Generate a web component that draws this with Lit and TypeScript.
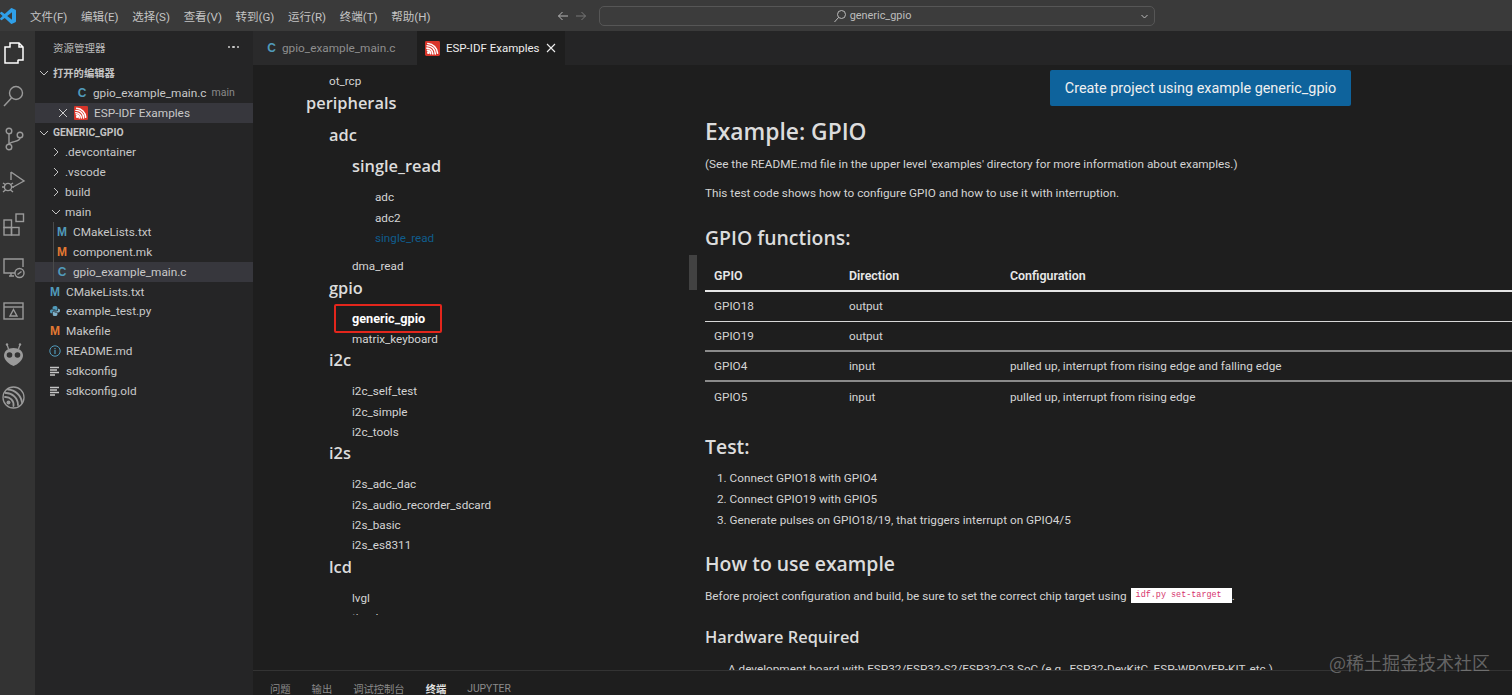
import { LitElement, html, css, svg } from "lit";
import { customElement } from "lit/decorators.js";

const esp = (s: number) => html`<svg class="esp" width=${s} height=${s} viewBox="0 0 16 16"><rect width="16" height="16" rx="1.5" fill="#d8352a"/><g fill="none" stroke="#fff" stroke-width="1.7" stroke-linecap="round"><path d="M3 2.6a11 11 0 0 1 10.4 10.4"/><path d="M2.2 5a8.6 8.6 0 0 1 8.8 8.8"/><path d="M2 7.6a6.2 6.2 0 0 1 6.4 6.2"/><path d="M2.6 10a3.6 3.6 0 0 1 3.4 3.6"/></g><circle cx="3.600" cy="12.400" r="1.400" fill="#fff"/></svg>`;
const chevD = html`<svg class="chev" width="12" height="12" viewBox="0 0 12 12"><path d="M2 4l4 4 4-4" fill="none" stroke="#c5c5c5" stroke-width="1"/></svg>`;
const chevR = html`<svg class="chev" width="12" height="12" viewBox="0 0 12 12"><path d="M4 2l4 4-4 4" fill="none" stroke="#c5c5c5" stroke-width="1"/></svg>`;
const info = html`<svg width="12" height="12" viewBox="0 0 12 12"><circle cx="6" cy="6" r="5.2" fill="none" stroke="#519aba" stroke-width="1"/><path d="M6 5v4M6 3v1.2" stroke="#519aba" stroke-width="1.2"/></svg>`;
const py = html`<svg width="12" height="12" viewBox="0 0 12 12"><path d="M6 1C4 1 3.600 1.800 3.600 2.600V4H6.400V4.600H2.400C1.400 4.600 1 5.400 1 6.400S1.500 8.200 2.400 8.200H3.400V7C3.400 6 4.200 5.400 5 5.400H7.400C8 5.400 8.400 5 8.400 4.400V2.600C8.400 1.600 7.600 1 6 1Z" fill="#519aba"/><path d="M6 11C8 11 8.400 10.200 8.400 9.400V8H5.600V7.400H9.600C10.600 7.400 11 6.600 11 5.600S10.500 3.800 9.600 3.800H9V5C9 6 8 6.400 7.200 6.400H4.800C4.200 6.400 3.800 7 3.800 7.600V9.400C3.800 10.400 4.400 11 6 11Z" fill="#7fb0c8"/></svg>`;
const lines = html`<svg width="12" height="12" viewBox="0 0 12 12"><path d="M1 2.500h9M1 5h7M1 7.500h9M1 10h5" stroke="#c5c5c5" stroke-width="1.300"/></svg>`;

type Ic = "c" | "m" | "mo" | "info" | "py" | "lines" | "";
const icon = (k: Ic) => {
  switch (k) {
    case "c": return html`<span class="fi c">C</span>`;
    case "m": return html`<span class="fi m">M</span>`;
    case "mo": return html`<span class="fi mo">M</span>`;
    case "info": return html`<span class="fi">${info}</span>`;
    case "py": return html`<span class="fi">${py}</span>`;
    case "lines": return html`<span class="fi">${lines}</span>`;
    default: return "";
  }
};

const ACT = [
  svg`<path d="M9 3h9l4 4v13H9zM18 3v4h4" fill="none" stroke="#fff" stroke-width="1.500"/><path d="M9 7H4v16h13v-3" fill="#333" stroke="#fff" stroke-width="1.500"/>`,
  svg`<circle cx="15" cy="10" r="6.500" fill="none" stroke="#9a9a9a" stroke-width="1.400"/><path d="M10.500 15L3 23" stroke="#9a9a9a" stroke-width="1.500"/>`,
  svg`<g fill="none" stroke="#9a9a9a" stroke-width="1.400"><circle cx="8" cy="5" r="2.800"/><circle cx="8" cy="21" r="2.800"/><circle cx="19" cy="9" r="2.800"/><path d="M8 8v10M19 12c0 4-9 3-11 6"/></g>`,
  svg`<g fill="none" stroke="#9a9a9a" stroke-width="1.400"><path d="M10 3l13 9-11 6M10 3v8"/><circle cx="7" cy="18" r="3.600"/><path d="M2 14l3 2M12 14l-3 2M1 18h2.500M13 18h-2.500M2 23l3-2.500M12 23l-3-2.500"/></g>`,
  svg`<g fill="none" stroke="#9a9a9a" stroke-width="1.400"><rect x="3" y="8" width="7.500" height="7.500"/><rect x="3" y="15.500" width="7.500" height="7.500"/><rect x="10.500" y="15.500" width="7.500" height="7.500"/><rect x="15" y="2" width="7.500" height="7.500"/></g>`,
  svg`<g fill="none" stroke="#9a9a9a" stroke-width="1.400"><path d="M14 18H3V4h19v8M8 21h5M10 18v3"/><circle cx="18.500" cy="18" r="4.500"/><path d="M16.500 19.500l4-3"/></g>`,
  svg`<g fill="none" stroke="#9a9a9a" stroke-width="1.400"><rect x="3" y="4" width="19" height="16"/><path d="M3 8h19"/></g><path d="M12.500 10.500l3.500 6.500h-7z" fill="none" stroke="#9a9a9a" stroke-width="1.400"/>`,
  svg`<path d="M12.500 6c5.500 0 9.500 3 9.500 7.500 0 5-5.500 9-9.500 10.500C8.500 22.500 3 18.500 3 13.500 3 9 7 6 12.500 6z" fill="#9a9a9a"/><path d="M7.500 7L6 2.500M17.500 7L19 2.500" stroke="#9a9a9a" stroke-width="1.300"/><circle cx="6" cy="2.500" r="1.200" fill="#9a9a9a"/><circle cx="19" cy="2.500" r="1.200" fill="#9a9a9a"/><circle cx="8.500" cy="13" r="2.800" fill="#333"/><circle cx="16.500" cy="13" r="2.800" fill="#333"/>`,
  svg`<circle cx="12.500" cy="12.500" r="10.500" fill="none" stroke="#9a9a9a" stroke-width="1.300"/><g fill="none" stroke="#9a9a9a" stroke-width="1.800" stroke-linecap="round"><path d="M7 4.500a15 15 0 0 1 14 13"/><path d="M4.500 8a12 12 0 0 1 12.500 12"/><path d="M4 12a8 8 0 0 1 8.500 9"/></g><circle cx="7.500" cy="17.500" r="2" fill="#9a9a9a"/>`,
];

const FILES: { t: string; pad: number; ic: Ic; chev?: any; sel?: boolean; head?: boolean; desc?: string; x?: boolean; esp?: boolean; guide?: boolean }[] = [
  { t: "打开的编辑器", pad: 3, ic: "", chev: chevD, head: true },
  { t: "gpio_example_main.c", pad: 41, ic: "c", desc: "main" },
  { t: "ESP-IDF Examples", pad: 23, ic: "", x: true, esp: true, sel: true },
  { t: "GENERIC_GPIO", pad: 3, ic: "", chev: chevD, head: true },
  { t: ".devcontainer", pad: 15, ic: "", chev: chevR },
  { t: ".vscode", pad: 15, ic: "", chev: chevR },
  { t: "build", pad: 15, ic: "", chev: chevR },
  { t: "main", pad: 15, ic: "", chev: chevD },
  { t: "CMakeLists.txt", pad: 21, ic: "m", guide: true },
  { t: "component.mk", pad: 21, ic: "mo", guide: true },
  { t: "gpio_example_main.c", pad: 21, ic: "c", guide: true, sel: true },
  { t: "CMakeLists.txt", pad: 14, ic: "m" },
  { t: "example_test.py", pad: 14, ic: "py" },
  { t: "Makefile", pad: 14, ic: "mo" },
  { t: "README.md", pad: 14, ic: "info" },
  { t: "sdkconfig", pad: 14, ic: "lines" },
  { t: "sdkconfig.old", pad: 14, ic: "lines" },
];

const TREE: [string, string][] = [
  ["l1", "ot_rcp"],
  ["h0", "peripherals"],
  ["h1", "adc"],
  ["h2", "single_read"],
  ["l2", "adc"],
  ["l2", "adc2"],
  ["l2 link", "single_read"],
  ["l1x", "dma_read"],
  ["h1", "gpio"],
  ["l1x cur", "generic_gpio"],
  ["l1x", "matrix_keyboard"],
  ["h1", "i2c"],
  ["l1x", "i2c_self_test"],
  ["l1x", "i2c_simple"],
  ["l1x", "i2c_tools"],
  ["h1", "i2s"],
  ["l1x", "i2s_adc_dac"],
  ["l1x", "i2s_audio_recorder_sdcard"],
  ["l1x", "i2s_basic"],
  ["l1x", "i2s_es8311"],
  ["h1", "lcd"],
  ["l1x", "lvgl"],
  ["l1x", "tjpgd"],
];

const ROWS = [
  ["GPIO18", "output", "", "w"],
  ["GPIO19", "output", "", "g"],
  ["GPIO4", "input", "pulled up, interrupt from rising edge and falling edge", "g"],
  ["GPIO5", "input", "pulled up, interrupt from rising edge", ""],
];

@customElement("app-root")
export class AppRoot extends LitElement {
  static styles = css`
    :host { display: block; width: 1512px; height: 695px; overflow: hidden; position: relative; background: #1e1e1e; color: #ccc; font-family: Roboto, "Noto Sans CJK SC", sans-serif; font-size: 12px; }
    .titlebar { height: 31px; background: #3a3a3a; display: flex; align-items: center; position: relative; }
    .logo { margin: 0 8px 0 0; width: 16px; height: 16px; flex: none; }
    .menu { display: flex; gap: 13.700px; margin-left: 6px; color: #c4c4c4; font-size: 11.500px; width: 527px; flex: none; white-space: nowrap; }
    .nav { display: flex; gap: 6px; width: 42px; align-items: center; flex: none; }
    .cmd { width: 556px; height: 20px; box-sizing: border-box; border: 1px solid #565656; border-radius: 5px; background: #3c3c3c; display: flex; align-items: center; justify-content: center; gap: 3px; color: #bdbdbd; font-size: 10.900px; position: relative; flex: none; padding-right: 10px; }
    .cmd .dd { position: absolute; right: 5px; top: 5px; }
    .body { display: flex; height: 664px; }
    .activity { width: 35px; background: #333; flex: none; display: flex; flex-direction: column; align-items: flex-start; padding: 9px 0 0 1px; gap: 18.100px; box-sizing: border-box; }
    .activity svg { display: block; flex: none; }
    .side { width: 218px; background: #252526; flex: none; display: flex; flex-direction: column; }
    .side-head { height: 32px; display: flex; align-items: center; justify-content: space-between; padding: 0 14px 0 18px; font-size: 10.500px; color: #bbb; }
    .dots { display: flex; gap: 2px; }
    .dots i { width: 2.500px; height: 2.500px; background: #ccc; border-radius: 50%; display: block; }
    .row { height: 19.880px; display: flex; align-items: center; white-space: nowrap; color: #c8c8c8; font-size: 11.800px; position: relative; box-sizing: border-box; }
    .row.sel { background: #37373d; }
    .row.head { font-weight: 700; font-size: 10.300px; color: #c4c4c4; }
    .row .chev { margin-right: 3px; flex: none; }
    .row .desc { color: #8a8a8a; font-size: 10.500px; margin-left: 5px; }
    .guide { position: absolute; left: 18px; top: 0; bottom: 0; width: 1px; background: #4a4a4a; }
    .fi { width: 12px; height: 16px; margin-right: 5px; display: inline-flex; align-items: center; justify-content: center; font-weight: 700; font-size: 12px; flex: none; color: #519aba; font-family: "Liberation Sans", sans-serif; }
    .fi.mo { color: #e37933; }
    .xbtn { width: 14px; margin-right: 2px; display: inline-flex; color: #ccc; }
    .esp { flex: none; margin-right: 6px; display: block; }
    .main { flex: 1; min-width: 0; display: flex; flex-direction: column; }
    .tabs { height: 34px; background: #252526; display: flex; flex: none; }
    .tab { display: flex; align-items: center; height: 34px; box-sizing: border-box; padding-left: 13px; font-size: 11.800px; color: #8e8e8e; white-space: nowrap; }
    .tab.one { width: 164px; background: #2a2a2b; }
    .tab.one .fi { margin-right: 5px; width: 11px; }
    .tab.two { width: 148px; background: #1e1e1e; color: #ededed; padding-left: 8px; font-size: 11.500px; }
    .tab.two .close { margin-left: auto; margin-right: 9px; display: flex; }
    .editor { flex: 1; min-height: 0; display: flex; position: relative; overflow: hidden; }
    .tree { width: 435px; flex: none; height: 550px; overflow: hidden; padding: 6.300px 0 0 53px; box-sizing: border-box; }
    .tree div { white-space: nowrap; color: #d4d4d4; }
    .h0, .h1, .h2 { font-family: "Open Sans", sans-serif; font-size: 16.400px; font-weight: 600; line-height: 21.800px; margin-bottom: 10px; }
    .tree .h0, .tree .h1, .tree .h2 { color: #dcdcdc; }
    .h1 { margin-left: 23px; }
    .h2 { margin-left: 46px; }
    .l1, .l1x, .l2 { font-size: 11.700px; line-height: 20.400px; }
    .l1 { margin-left: 23px; }
    .l1x { margin-left: 46px; }
    .l2 { margin-left: 69px; }
    .tree .link { color: #0f5c8c; margin-bottom: 8px; }
    .tree .cur { font-weight: 700; font-size: 12.700px; color: #fff; position: relative; }
    .redbox { position: absolute; left: -18px; top: -4.500px; width: 108px; height: 29px; box-sizing: border-box; border: 2px solid #e3261c; border-radius: 2px; }
    .doc { flex: 1; min-width: 0; padding: 5px 0 0 17px; color: #d4d4d4; font-size: 11.750px; overflow: hidden; }
    .doc-btn { display: flex; justify-content: flex-start; margin-left: 345px; }
    .btn { width: 301px; height: 36px; background: #0e639c; border-radius: 2px; color: #f0f0f0; display: flex; align-items: center; justify-content: center; font-size: 14.400px; }
    h1, h2, h3 { margin: 0; font-family: "Open Sans", sans-serif; font-weight: 600; color: #dcdcdc; white-space: nowrap; }
    h1 { font-size: 22.800px; line-height: 30px; margin-top: 11px; }
    h2 { font-size: 19.400px; line-height: 26px; }
    h3 { font-size: 16.400px; line-height: 22px; margin-top: 21px; }
    p { margin: 0; line-height: 18px; white-space: nowrap; }
    .p1 { margin-top: 8px; }
    .p2 { margin-top: 11px; }
    .h-fn { margin-top: 23px; }
    .table { margin-top: 10px; width: 807px; }
    .tr { display: grid; grid-template-columns: 135px 161px 1fr; padding-left: 9px; align-items: center; height: 30.200px; box-sizing: border-box; }
    .tr.th { height: 30.500px; font-weight: 600; font-size: 12.400px; color: #e8e8e8; border-bottom: 2px solid #e6e6e6; }
    .tr.w { border-bottom: 1px solid #d8d8d8; }
    .tr.g { border-bottom: 2px solid #8a8a8a; }
    .h-test { margin-top: 21.900px; }
    ol { margin: 8px 0 0; padding: 0 0 0 12px; list-style: none; }
    ol li { line-height: 20.800px; white-space: nowrap; }
    .h-how { margin-top: 20px; }
    .p3 { margin-top: 10px; display: flex; align-items: center; }
    code { background: #fff; color: #d6336c; font-family: "Liberation Mono", monospace; font-size: 8.450px; padding: 0 10px 0 5px; margin-left: 4px; line-height: 15px; height: 15px; display: inline-block; }
    .hw { margin-top: 12px; padding-left: 23px; line-height: 18px; white-space: nowrap; }
    .thumb { position: absolute; left: 436px; top: 190px; width: 8px; height: 35px; background: #424242; }
    .panel { height: 25px; flex: none; box-sizing: border-box; background: #1e1e1e; border-top: 1px solid #333; position: relative; z-index: 1; display: flex; align-items: center; padding: 10px 0 0 17px; gap: 21px; font-size: 10.300px; color: #8b8b8b; }
    .panel .on { color: #e2e2e2; font-weight: 700; }
    .panel span { white-space: nowrap; }
    .mark { position: absolute; right: 22px; top: 650px; font-size: 18px; line-height: 24px; color: rgba(200,200,200,0.42); z-index: 2; font-family: "Noto Sans CJK SC", sans-serif; white-space: nowrap; }
  `;

  render() {
    return html`
      <div class="titlebar">
        <svg class="logo" viewBox="0 0 24 24"><path fill="#2f9fe8" d="M23.150 2.587L18.210.21a1.494 1.494 0 0 0-1.705.29l-9.460 8.630-4.120-3.128a.999.999 0 0 0-1.276.057L.327 7.261A1 1 0 0 0 .326 8.740L3.899 12 .326 15.260a1 1 0 0 0 .001 1.479L1.650 17.940a.999.999 0 0 0 1.276.057l4.120-3.128 9.460 8.630a1.492 1.492 0 0 0 1.704.29l4.942-2.377A1.500 1.500 0 0 0 24 20.060V3.939a1.500 1.500 0 0 0-.850-1.352zm-5.146 14.861L10.826 12l7.178-5.448v10.896z"/></svg>
        <div class="menu">${["文件(F)", "编辑(E)", "选择(S)", "查看(V)", "转到(G)", "运行(R)", "终端(T)", "帮助(H)"].map((m) => html`<span>${m}</span>`)}</div>
        <div class="nav">
          <svg width="12" height="12" viewBox="0 0 12 12"><path d="M11 6H1.500M5.500 2L1.500 6l4 4" fill="none" stroke="#b5b5b5" stroke-width="1"/></svg>
          <svg width="12" height="12" viewBox="0 0 12 12"><path d="M1 6h9.500M6.500 2l4 4-4 4" fill="none" stroke="#777" stroke-width="1"/></svg>
        </div>
        <div class="cmd">
          <svg width="14" height="14" viewBox="0 0 14 14"><circle cx="8.500" cy="5.500" r="4" fill="none" stroke="#bbb"/><path d="M5.500 8.500L1.500 13" stroke="#bbb"/></svg>
          <span>generic_gpio</span>
          <svg class="dd" width="9" height="9" viewBox="0 0 9 9"><path d="M1.500 3l3 3 3-3" fill="none" stroke="#bbb"/></svg>
        </div>
      </div>
      <div class="body">
        <div class="activity">${ACT.map((a) => html`<svg width="25" height="25" viewBox="0 0 25 25">${a}</svg>`)}</div>
        <div class="side">
          <div class="side-head"><span>资源管理器</span><span class="dots"><i></i><i></i><i></i></span></div>
          ${FILES.map((f) => html`
            <div class="row ${f.sel ? "sel" : ""} ${f.head ? "head" : ""}" style="padding-left:${f.pad}px">
              ${f.guide ? html`<i class="guide"></i>` : ""}
              ${f.x ? html`<span class="xbtn"><svg width="10" height="10" viewBox="0 0 10 10"><path d="M1 1l8 8M9 1l-8 8" stroke="#ccc"/></svg></span>` : ""}
              ${f.chev ?? ""}${icon(f.ic)}${f.esp ? esp(14) : ""}<span>${f.t}</span>
              ${f.desc ? html`<span class="desc">${f.desc}</span>` : ""}
            </div>`)}
        </div>
        <div class="main">
          <div class="tabs">
            <div class="tab one">${icon("c")}<span>gpio_example_main.c</span></div>
            <div class="tab two">${esp(15)}<span>ESP-IDF Examples</span><span class="close"><svg width="10" height="10" viewBox="0 0 10 10"><path d="M1 1l8 8M9 1l-8 8" stroke="#eee" stroke-width="1.100"/></svg></span></div>
          </div>
          <div class="editor">
            <div class="tree">
              ${TREE.map(([c, t]) => html`<div class=${c}>${t}${c.includes("cur") ? html`<span class="redbox"></span>` : ""}</div>`)}
            </div>
            <div class="thumb"></div>
            <div class="doc">
              <div class="doc-btn"><div class="btn">Create project using example generic_gpio</div></div>
              <h1>Example: GPIO</h1>
              <p class="p1">(See the README.md file in the upper level 'examples' directory for more information about examples.)</p>
              <p class="p2">This test code shows how to configure GPIO and how to use it with interruption.</p>
              <h2 class="h-fn">GPIO functions:</h2>
              <div class="table">
                <div class="tr th"><span>GPIO</span><span>Direction</span><span>Configuration</span></div>
                ${ROWS.map((r) => html`<div class="tr ${r[3]}"><span>${r[0]}</span><span>${r[1]}</span><span>${r[2]}</span></div>`)}
              </div>
              <h2 class="h-test">Test:</h2>
              <ol>
                <li>1. Connect GPIO18 with GPIO4</li>
                <li>2. Connect GPIO19 with GPIO5</li>
                <li>3. Generate pulses on GPIO18/19, that triggers interrupt on GPIO4/5</li>
              </ol>
              <h2 class="h-how">How to use example</h2>
              <p class="p3"><span>Before project configuration and build, be sure to set the correct chip target using</span><code>idf.py set-target</code><span>.</span></p>
              <h3>Hardware Required</h3>
              <div class="hw">A development board with ESP32/ESP32-S2/ESP32-C3 SoC (e.g., ESP32-DevKitC, ESP-WROVER-KIT, etc.)</div>
            </div>
          </div>
          <div class="panel"><span>问题</span><span>输出</span><span>调试控制台</span><span class="on">终端</span><span>JUPYTER</span></div>
        </div>
      </div>
      <div class="mark">@稀土掘金技术社区</div>
    `;
  }
}
